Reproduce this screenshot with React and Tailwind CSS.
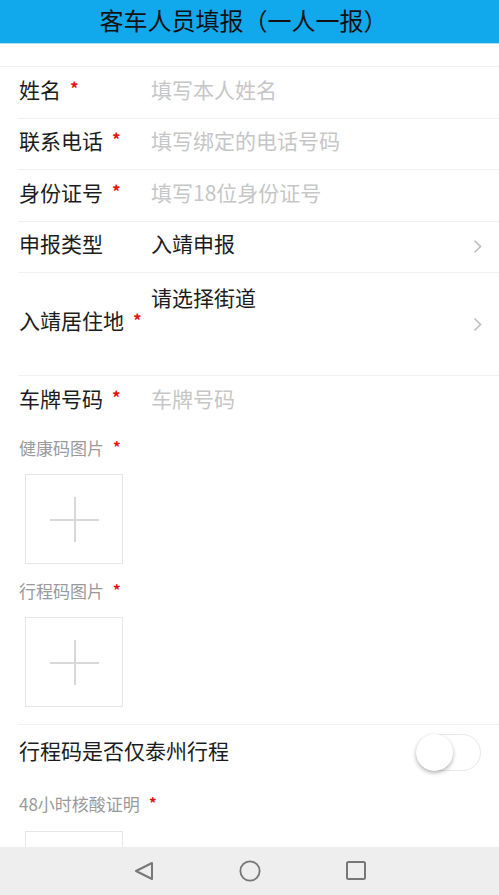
import { useState } from 'react';

const FONT = { fontFamily: '"Noto Sans CJK SC", "Noto Sans", sans-serif' };

function Star() {
  return <span className="ml-[9px] inline-block translate-y-[-2px] text-[17px] font-bold leading-none text-[#e8100f]">*</span>;
}

function Chevron() {
  return (
    <svg width="9" height="15" viewBox="0 0 9 15" className="shrink-0">
      <path d="M1.5 1.5 L7.5 7.5 L1.5 13.5" fill="none" stroke="#bdbdbd" strokeWidth="1.6" />
    </svg>
  );
}

function Row({ label, required, children, chevron, tall }) {
  return (
    <div className={`ml-[18px] flex items-center border-b border-[#f0f0f0] pr-[17px] ${tall ? 'h-[103px]' : 'h-[51.5px]'}`}>
      <div className="flex w-[133px] shrink-0 items-center pb-[6px] pl-px text-[21px] text-[#1c1c1c]">
        {label}
        {required && <Star />}
      </div>
      <div className={`flex-1 text-[21px] ${tall ? 'self-start pt-[9px]' : 'pb-[6px]'}`}>{children}</div>
      {chevron && <Chevron />}
    </div>
  );
}

function Upload() {
  return (
    <div className="relative ml-[25px] mt-[12px] h-[90px] w-[98px] border border-[#e6e6e6] bg-white">
      <div className="absolute left-[24px] top-[44px] h-[1.5px] w-[49px] bg-[#d8d8d8]" />
      <div className="absolute left-[48px] top-[22px] h-[45px] w-[1.5px] bg-[#d8d8d8]" />
    </div>
  );
}

function SubLabel({ children, className }) {
  return (
    <div className={`ml-[19px] flex h-[24px] items-center pb-[4px] text-[17px] text-[#9a9a9a] ${className}`}>
      {children}
      <span className="ml-[9px] inline-block translate-y-[-2px] text-[15px] font-bold leading-none text-[#e8100f]">*</span>
    </div>
  );
}

export default function App() {
  const [only, setOnly] = useState(false);

  return (
    <div className="min-h-[895px] bg-white pb-[60px]" style={FONT}>
      <header className="flex h-[44px] items-center justify-center border-b border-[#a9dcf4] bg-[#12a8ec] pb-[3px] pr-[12px] text-[24px] text-[#111]">
        客车人员填报（一人一报）
      </header>

      <div className="mt-[22px] border-t border-[#f0f0f0]">
        <Row label="姓名" required>
          <span className="text-[#c6c6c6]">填写本人姓名</span>
        </Row>
        <Row label="联系电话" required>
          <span className="text-[#c6c6c6]">填写绑定的电话号码</span>
        </Row>
        <Row label="身份证号" required>
          <span className="text-[#c6c6c6]">填写18位身份证号</span>
        </Row>
        <Row label="申报类型" chevron>
          <span className="text-[#1c1c1c]">入靖申报</span>
        </Row>
        <Row label="入靖居住地" required chevron tall>
          <span className="text-[#1c1c1c]">请选择街道</span>
        </Row>
        <div className="ml-[18px] flex h-[51px] items-center pb-[6px]">
          <div className="flex w-[133px] shrink-0 items-center pl-px text-[21px] text-[#1c1c1c]">
            车牌号码
            <Star />
          </div>
          <span className="text-[21px] text-[#c6c6c6]">车牌号码</span>
        </div>
      </div>

      <SubLabel className="mt-[11px]">健康码图片</SubLabel>
      <Upload />

      <SubLabel className="mt-[17px]">行程码图片</SubLabel>
      <Upload />

      <div className="ml-[18px] mt-[17px] flex h-[58px] items-center justify-between border-t border-[#f0f0f0] pr-[18px]">
        <span className="pb-[6px] pl-px text-[21px] text-[#1c1c1c]">行程码是否仅泰州行程</span>
        <button
          type="button"
          onClick={() => setOnly(!only)}
          className={`relative mb-[3px] h-[37px] w-[65px] rounded-full border border-[#e8e8e8] ${only ? 'bg-[#12a8ec]' : 'bg-white'}`}
        >
          <span className={`absolute top-[-1px] h-[37px] w-[37px] rounded-full bg-white shadow-[0_2px_4px_rgba(0,0,0,0.3)] ${only ? 'left-[27px]' : 'left-[-1px]'}`} />
        </button>
      </div>

      <SubLabel className="mt-[12px]">48小时核酸证明</SubLabel>
      <div className="ml-[25px] mt-[13px] h-[90px] w-[98px] border border-[#e6e6e6]" />

      <nav className="fixed bottom-0 left-0 right-0 flex h-[48px] items-center justify-center gap-[84px] bg-[#eeeeee]">
        <svg width="22" height="20" viewBox="0 0 22 20">
          <path d="M19 2 L3 10 L19 18 Z" fill="none" stroke="#777" strokeWidth="2" strokeLinejoin="round" />
        </svg>
        <svg width="22" height="22" viewBox="0 0 24 24">
          <circle cx="12" cy="12" r="10.5" fill="none" stroke="#777" strokeWidth="2" />
        </svg>
        <svg width="22" height="22" viewBox="0 0 22 22">
          <rect x="2" y="2" width="18" height="17" rx="1.5" fill="none" stroke="#777" strokeWidth="2" />
        </svg>
      </nav>
    </div>
  );
}
